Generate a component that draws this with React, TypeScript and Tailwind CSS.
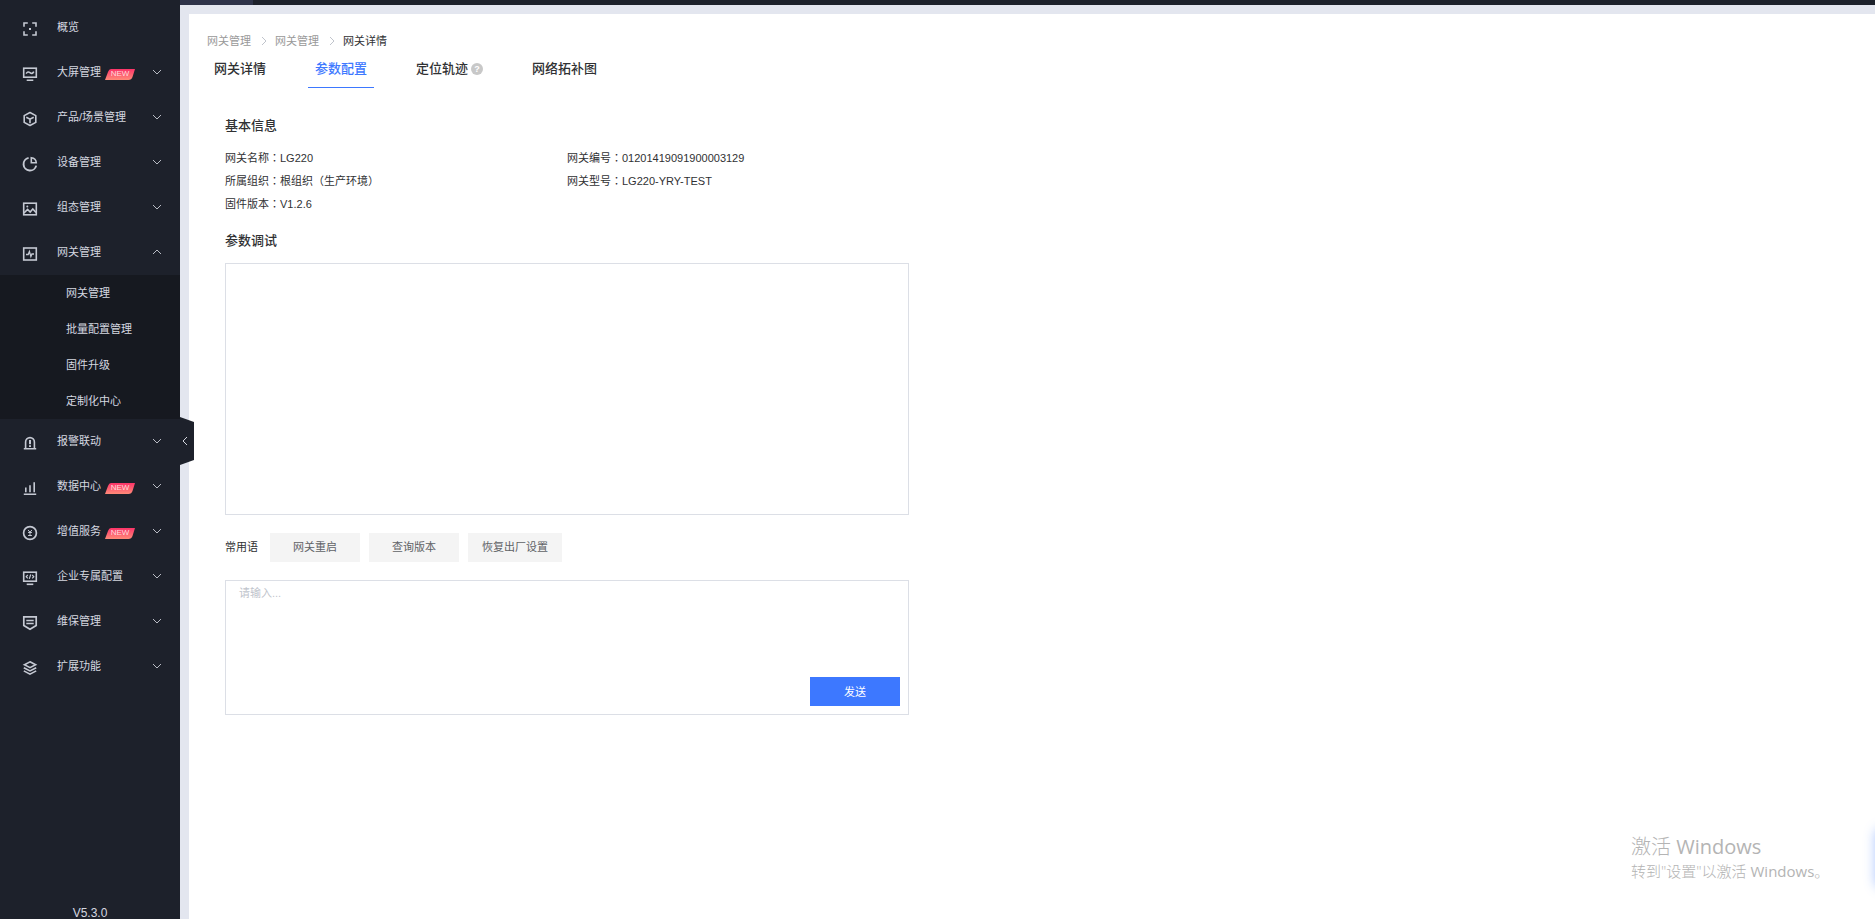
import { useState } from "react";
import type { ReactNode } from "react";
import clsx from "clsx";

interface MenuItem {
  label: string;
  icon: ReactNode;
  isNew?: boolean;
  leaf?: boolean;
  children?: string[];
}

const Icon = ({ children }: { children: ReactNode }) => (
  <svg
    viewBox="0 0 16 16"
    className="w-4 h-4 shrink-0"
    fill="none"
    stroke="currentColor"
    strokeWidth="1.6"
    aria-hidden="true"
  >
    {children}
  </svg>
);

const menu: MenuItem[] = [
  {
    label: "概览",
    leaf: true,
    icon: (
      <Icon>
        <path d="M2 5.8V2h3.8M10.2 2H14v3.8M14 10.2V14h-3.8M5.8 14H2v-3.8" />
        <rect x="7" y="7" width="2" height="2" fill="currentColor" stroke="none" />
      </Icon>
    ),
  },
  {
    label: "大屏管理",
    isNew: true,
    icon: (
      <Icon>
        <rect x="1.7" y="2.2" width="12.6" height="9" />
        <path d="M4.2 7.6c1-2 2.4-2 3.8-.9s2.8 1 3.8-1M4.7 14.3h6.6" />
      </Icon>
    ),
  },
  {
    label: "产品/场景管理",
    icon: (
      <Icon>
        <path d="M8 1.5l5.8 3.1v6.8L8 14.5l-5.8-3.1V4.6z" strokeLinejoin="round" />
        <path d="M4.3 6.2L8 8.2l3.7-2M8 8.2v4" />
      </Icon>
    ),
  },
  {
    label: "设备管理",
    icon: (
      <Icon>
        <path d="M6.6 1.9A6.4 6.4 0 1 0 14.2 9.6" strokeWidth="1.9" />
        <path d="M9.3 1.7v5h5c-.2-2.7-2.3-4.8-5-5z" />
      </Icon>
    ),
  },
  {
    label: "组态管理",
    icon: (
      <Icon>
        <rect x="1.7" y="2.2" width="12.6" height="11.6" />
        <path d="M2 12l3.6-3.6 2.6 2.6 2.6-3L14 11.5" />
        <circle cx="5.3" cy="5.5" r="1" fill="currentColor" stroke="none" />
      </Icon>
    ),
  },
  {
    label: "网关管理",
    children: ["网关管理", "批量配置管理", "固件升级", "定制化中心"],
    icon: (
      <Icon>
        <rect x="1.7" y="2" width="12.6" height="12" />
        <path d="M4 8.5h2.2l1.2-3 1.5 5 1-2.5H12" strokeWidth="1.3" />
      </Icon>
    ),
  },
  {
    label: "报警联动",
    icon: (
      <Icon>
        <path d="M3.6 13.5V7a4.4 4.4 0 0 1 8.8 0v6.5M1.8 13.8h12.4" />
        <path d="M8 5v4.3M8 10.3v1.7" strokeWidth="2" />
      </Icon>
    ),
  },
  {
    label: "数据中心",
    isNew: true,
    icon: (
      <Icon>
        <path d="M1.8 14.3h12.4M3.8 7.5v4.7M8 5.2v7M12.2 2.2v10" />
      </Icon>
    ),
  },
  {
    label: "增值服务",
    isNew: true,
    icon: (
      <Icon>
        <circle cx="8" cy="8" r="6.4" strokeWidth="1.7" />
        <path d="M6.1 5L8 7.2 9.9 5M8 7.2v3.6M6.1 7.5h3.8M6.1 10.5h3.8" strokeWidth="1" />
      </Icon>
    ),
  },
  {
    label: "企业专属配置",
    icon: (
      <Icon>
        <rect x="1.7" y="2.2" width="12.6" height="9" />
        <path d="M5.8 5L4.2 6.7l1.6 1.7M10.2 5l1.6 1.7-1.6 1.7M8.7 4.5l-1.4 4.4" strokeWidth="1.2" />
        <path d="M4.7 14.3h6.6" />
      </Icon>
    ),
  },
  {
    label: "维保管理",
    icon: (
      <Icon>
        <path d="M1.8 1.9h12.4v8.6L8 14.3l-6.2-3.8z" strokeWidth="1.7" />
        <path d="M4.3 5.5h7.4M4.3 8.5h7.4" />
      </Icon>
    ),
  },
  {
    label: "扩展功能",
    icon: (
      <Icon>
        <path d="M8 1.8l5.6 2.9L8 7.6 2.4 4.7zM1.8 7.7L8 10.9l6.2-3.2M1.8 10.9L8 14.1l6.2-3.2" />
      </Icon>
    ),
  },
];

const tabs = ["网关详情", "参数配置", "定位轨迹", "网络拓补图"];

const info = [
  ["网关名称", "LG220"],
  ["网关编号", "01201419091900003129"],
  ["所属组织", "根组织（生产环境）"],
  ["网关型号", "LG220-YRY-TEST"],
  ["固件版本", "V1.2.6"],
];

const phrases = ["网关重启", "查询版本", "恢复出厂设置"];

const NewBadge = () => (
  <span className="relative ml-1 mt-[5px] w-[30px] h-[11px] flex items-center justify-center">
    <svg viewBox="0 0 30 11" className="absolute inset-0 w-full h-full" aria-hidden="true">
      <defs>
        <linearGradient id="badge" x1="0" y1="0" x2="0" y2="1">
          <stop offset="0" stopColor="#fc3469" />
          <stop offset="1" stopColor="#ff8a78" />
        </linearGradient>
      </defs>
      <path d="M6 0h24l-2.500 8q-1 3-4 3H0l3-8q1-3 3-3z" fill="url(#badge)" />
    </svg>
    <span className="relative text-[8px] leading-none text-[#ffd9dc]">NEW</span>
  </span>
);

const Chevron = ({ up }: { up?: boolean }) => (
  <svg
    viewBox="0 0 10 6"
    className="ml-auto w-[10px] h-[6px] text-[#b9bcc5]"
    fill="none"
    stroke="currentColor"
    aria-hidden="true"
  >
    <path d={up ? "M1 5l4-4 4 4" : "M1 1l4 4 4-4"} />
  </svg>
);

const Sidebar = () => {
  const [open, setOpen] = useState("网关管理");

  return (
    <aside className="relative flex flex-col w-[180px] shrink-0 pt-[5px] bg-[#1d212b] text-[#d5d8e0]">
      <nav>
        {menu.map((item) => (
          <div key={item.label}>
            <button
              onClick={() => setOpen(open === item.label ? "" : item.label)}
              className="flex items-center w-full h-[45px] pl-[22px] pr-[18px] pb-[2px] cursor-pointer"
            >
              <span className="pt-1 text-[#c5c9d3]">{item.icon}</span>
              <span className="ml-[19px]">{item.label}</span>
              {item.isNew && <NewBadge />}
              {!item.leaf && <Chevron up={open === item.label} />}
            </button>
            {item.children && open === item.label && (
              <ul className="bg-[#161920]">
                {item.children.map((child) => (
                  <li key={child}>
                    <a href="#" className="flex items-center h-9 pl-[66px]">
                      {child}
                    </a>
                  </li>
                ))}
              </ul>
            )}
          </div>
        ))}
      </nav>
      <p className="mt-auto text-center text-xs leading-3">V5.3.0</p>

      <button
        aria-label="收起菜单"
        className="absolute left-full top-[417px] w-[14px] h-12 cursor-pointer"
      >
        <svg viewBox="0 0 14 48" className="w-full h-full" fill="none">
          <path d="M0 0l14 5v38L0 48z" fill="#1d212b" />
          <path d="M7 20l-4 4 4 4" stroke="#d5d8e0" />
        </svg>
      </button>
    </aside>
  );
};

const Breadcrumb = () => (
  <nav className="flex items-center h-4 text-[#999]">
    {["网关管理", "网关管理"].map((crumb, i) => (
      <span key={i} className="flex items-center">
        <a href="#">{crumb}</a>
        <svg viewBox="0 0 24 10" className="w-6 h-[10px]" fill="none" stroke="#c0c4cc">
          <path d="M11 1l4 4-4 4" />
        </svg>
      </span>
    ))}
    <span className="text-[#303133]">网关详情</span>
  </nav>
);

const App = () => {
  const [active, setActive] = useState("参数配置");
  const [message, setMessage] = useState("");

  return (
    <div className="relative flex min-h-screen overflow-hidden text-[11px] leading-4 text-[#303133] bg-[#e3e6ef] font-['Liberation_Sans','Noto_Sans_CJK_SC',sans-serif]">
      <Sidebar />

      <div className="flex flex-col flex-1 min-w-0">
        <header className="h-[5px] bg-[#1d212b]">
          <div className="w-[73px] h-full bg-[#2e3349]" />
        </header>

        <main className="flex-1 mt-[9px] ml-[9px] pl-[18px] pt-[19px] bg-white">
          <Breadcrumb />

          <div className="flex gap-[35px] text-[13px] font-medium" role="tablist">
            {tabs.map((tab) => (
              <button
                key={tab}
                role="tab"
                aria-selected={active === tab}
                onClick={() => setActive(tab)}
                className={clsx(
                  "flex items-center h-[39px] px-[7px] pt-[2px] border-b cursor-pointer",
                  active === tab ? "text-[#3d78ff] border-[#3d78ff]" : "border-transparent"
                )}
              >
                {tab}
                {tab === "定位轨迹" && (
                  <span className="ml-[3px] flex items-center justify-center w-3 h-3 rounded-full bg-[#c8c8c8] text-white text-[9px] leading-none font-bold">
                    ?
                  </span>
                )}
              </button>
            ))}
          </div>

          <div className="w-[702px] max-w-full pl-[18px] pt-7">
            <h2 className="text-[13px] leading-5 font-medium">基本信息</h2>
            <dl className="grid grid-cols-2 mt-[10px]">
              {info.map(([label, value]) => (
                <div key={label} className="flex items-center h-[23px]">
                  <dt>
                    {label}
                    <span className="font-['Noto_Sans_CJK_TC',sans-serif]">：</span>
                  </dt>
                  <dd>{value}</dd>
                </div>
              ))}
            </dl>

            <h2 className="mt-4 text-[13px] leading-5 font-medium">参数调试</h2>
            <div className="mt-3 h-[252px] border border-[#dcdfe6]" />

            <div className="flex items-center gap-[9px] mt-[18px]">
              <span className="mr-[3px] pb-[2px]">常用语</span>
              {phrases.map((phrase) => (
                <button
                  key={phrase}
                  onClick={() => setMessage(phrase)}
                  className="h-[29px] min-w-[90px] px-[14px] pb-[2px] bg-[#f4f4f4] text-[#606266] cursor-pointer"
                >
                  {phrase}
                </button>
              ))}
            </div>

            <div className="mt-[18px] flex flex-col border border-[#dcdfe6]">
              <textarea
                aria-label="消息"
                placeholder="请输入..."
                value={message}
                onChange={(e) => setMessage(e.target.value)}
                className="h-24 px-[13px] py-1 resize-none outline-none placeholder:text-[#c0c4cc]"
              />
              <button className="self-end mr-2 mb-2 w-[90px] h-[29px] bg-[#3d78ff] text-white cursor-pointer">
                发送
              </button>
            </div>
          </div>
        </main>
      </div>

      <div className="absolute right-[46px] bottom-[38px] w-[198px] text-[#b4b4b4] font-light whitespace-nowrap pointer-events-none font-['Open_Sans','Noto_Sans_CJK_SC',sans-serif]">
        <p className="text-[20px] leading-7">
          激活 <span className="font-normal">Windows</span>
        </p>
        <p className="text-[15px] leading-5">
          转到"设置"以激活 <span className="font-normal">Windows</span>。
        </p>
      </div>

      <div className="absolute -right-[60px] bottom-[31px] w-[60px] h-[60px] rounded-lg shadow-[0_0_12px_#3d78ff66]" />
    </div>
  );
};

export default App;
